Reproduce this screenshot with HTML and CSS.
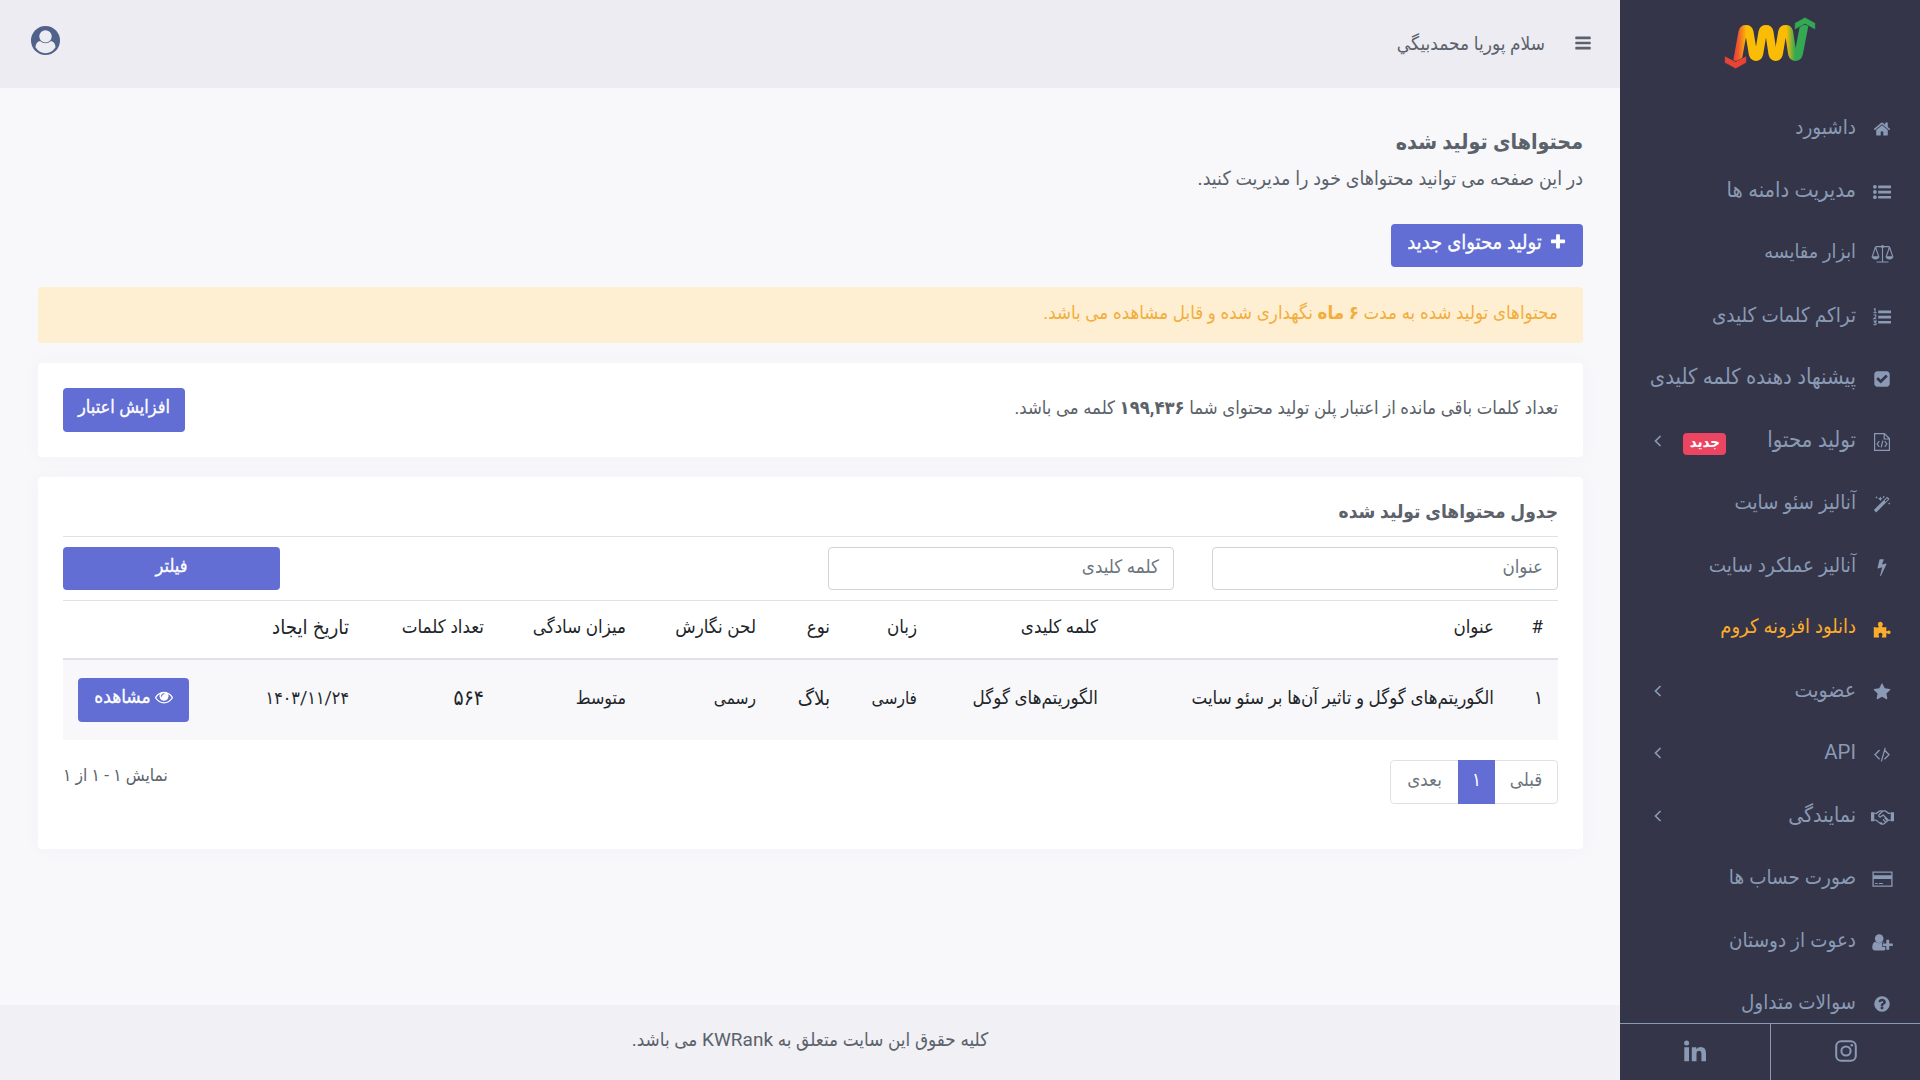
FILE: index.html
```html
<!DOCTYPE html>
<html lang="fa" dir="rtl">
<head>
<meta charset="utf-8">
<title>محتواهای تولید شده</title>
<link rel="stylesheet" href="styles.css">
</head>
<body>
<svg class="defs" width="0" height="0" aria-hidden="true">
  <symbol id="angle" viewBox="0 0 18 18"><path d="M11.5 4 6.5 9l5 5" fill="none" stroke="currentColor" stroke-width="1.7"/></symbol>
</svg>
<div class="app">
  <aside class="sidebar">
    <div class="brand">
      <svg class="logo" viewBox="312 51 276 156">
        <defs><linearGradient id="wave" gradientUnits="userSpaceOnUse" x1="342" y1="0" x2="560" y2="0"><stop offset="0" stop-color="#ea4335"/><stop offset=".06" stop-color="#f05a2e"/><stop offset=".17" stop-color="#fbbc05"/><stop offset=".72" stop-color="#fbbc05"/><stop offset=".84" stop-color="#34a853"/><stop offset="1" stop-color="#34a853"/></linearGradient></defs>
        <path d="M352 184 368 96C371 85 385 85 388 96L399 162C402 173 414 173 417 162L428 96C431 85 445 85 448 96L458 162C461 173 473 173 476 162L487 96C490 85 504 85 507 96L517 162C520 173 533 173 536 162L553 74" fill="none" stroke="url(#wave)" stroke-width="25"/>
        <path d="M524 89 555 72 586 89V69L555 52 524 69Z" fill="#34a853" stroke="#343549" stroke-width="1.5"/>
        <path d="M314 168 347 185 379 168V188L347 206 314 188Z" fill="#ea4335" stroke="#343549" stroke-width="1.5"/>
      </svg>
    </div>
    <nav class="menu">
      <a class="item"><svg class="ico" viewBox="0 0 1792 1792"><path d="M1472 992v480q0 26-19 45t-45 19h-384v-384h-256v384h-384q-26 0-45-19t-19-45v-480q0-1 .5-3t.5-3l575-474 575 474q1 2 1 6zm223-69l-62 74q-8 9-21 11h-3q-13 0-21-7l-692-577-692 577q-12 8-24 7-13-2-21-11l-62-74q-8-10-7-23.5t11-21.5l719-599q32-26 76-26t76 26l244 204v-195q0-14 9-23t23-9h192q14 0 23 9t9 23v408l219 182q10 8 11 21.5t-7 23.5z"/></svg><span>داشبورد</span></a>
      <a class="item"><svg class="ico" viewBox="0 0 18 18"><circle cx="1.9" cy="3.8" r="1.9"/><circle cx="1.9" cy="9" r="1.9"/><circle cx="1.9" cy="14.2" r="1.9"/><path d="M5.2 2.5H18v2.7H5.2zM5.2 7.7H18v2.7H5.2zM5.2 12.9H18v2.7H5.2z"/></svg><span>مدیریت دامنه ها</span></a>
      <a class="item"><svg class="ico wide" viewBox="0 0 22 18"><path d="M4 1.6h14M11 1v15.6M5 17h12M4 2 .8 11.5M4 2l3.2 9.500M18 2l-3.200 9.500M18 2l3.200 9.500" fill="none" stroke="currentColor" stroke-width="1.1"/><circle cx="11" cy="1.600" r="1.500"/><path d="M0 11.300h8c0 1.800-1.700 3.200-4 3.200s-4-1.400-4-3.200zM14 11.300h8c0 1.800-1.700 3.200-4 3.200s-4-1.400-4-3.200z"/></svg><span>ابزار مقایسه</span></a>
      <a class="item"><svg class="ico" viewBox="0 0 18 18"><path d="M5.2 2.500H18v2.700H5.200zM5.200 7.700H18v2.700H5.200zM5.200 12.900H18v2.700H5.200z"/><path d="M.8 1.200 2 .6v4M.5 4.700h3.200M.6 7.300q2.300-1.300 2.400.5Q2.700 9 .7 10.800h2.700M.5 13.100h2.600l-1.400 1.500q1.800 0 1.500 1.500-.6 1.300-2.700.4" fill="none" stroke="currentColor" stroke-width="1.100"/></svg><span>تراکم کلمات کلیدی</span></a>
      <a class="item"><svg class="ico" viewBox="0 0 1792 1792"><path d="M813 1299l614-614q19-19 19-45t-19-45l-102-102q-19-19-45-19t-45 19l-467 467-211-211q-19-19-45-19t-45 19l-102 102q-19 19-19 45t19 45l358 358q19 19 45 19t45-19zm851-883v960q0 119-84.5 203.5t-203.500 84.500h-960q-119 0-203.500-84.500t-84.500-203.500v-960q0-119 84.500-203.500t203.500-84.500h960q119 0 203.500 84.500t84.500 203.500z"/></svg><span>پیشنهاد دهنده کلمه کلیدی</span></a>
      <a class="item"><svg class="ico" viewBox="0 0 18 18"><path d="M1.600.6h9.800l5 5v11.800H1.600zM11.200.8V6h5.200M6.300 8.200 4.100 11l2.200 2.800M11.700 8.200l2.200 2.800-2.200 2.800M9.800 7.600l-1.600 6.800" fill="none" stroke="currentColor" stroke-width="1.200"/></svg><span>تولید محتوا</span><b class="badge">جدید</b><svg class="arrow"><use href="#angle"/></svg></a>
      <a class="item"><svg class="ico" viewBox="0 0 18 18"><path fill-rule="evenodd" d="M1.300 14.600 13.700 2.200q.5-.5 1 0l1.400 1.400q.5.500 0 1L3.700 17q-.5.500-1 0l-1.400-1.400q-.5-.5 0-1zM11.600 5.700l1 1L15 4.200l-1-1z"/><path d="m3.400 1 .4 1 1 .4-1 .400-.4 1-.4-1-1-.400 1-.400zM7.300 1.400 8 3.100l1.700.7-1.700.7-.7 1.700-.7-1.700-1.700-.7 1.700-.7zM10.700.6l.4 1 1 .4-1 .4-.4 1-.4-1-1-.4 1-.4zM16.200 7.300l.4 1 1 .4-1 .4-.4 1-.4-1-1-.4 1-.4z"/></svg><span>آنالیز سئو سایت</span></a>
      <a class="item"><svg class="ico" viewBox="0 0 1792 1792"><path d="M1333 566q18 20 7 44l-540 1157q-13 25-42 25-4 0-14-2-17-5-25.500-19t-4.500-30l197-808-406 101q-4 1-12 1-18 0-31-11-18-15-13-39l201-825q4-14 16-23t28-9h328q19 0 32 12.500t13 29.500q0 8-5 18l-171 463 396-98q8-2 12-2 19 0 34 15z"/></svg><span>آنالیز عملکرد سایت</span></a>
      <a class="item hot"><svg class="ico" viewBox="0 0 18 18"><path d="M.8 7.100q2.500.5 4.800.1c.5-.6-.7-1.500-.7-2.900 0-1.500 1-2.600 2.400-2.600s2.500 1.100 2.500 2.600c0 1.300-1.200 2.100-.8 2.800 1.400.3 3 .1 4.300-.2v4.200c.8.500 1.300-.7 2.500-.7 1.100 0 1.800.7 1.800 1.800s-.7 1.800-1.800 1.800c-1.200 0-1.700-.9-2.500-.6v4.100H9.200c-.9-.6.300-1.600.3-2.700 0-1.200-.8-2-2-2s-2 .8-2 2c0 1.100 1.200 2 .3 2.700H.8z"/></svg><span>دانلود افزونه کروم</span></a>
      <a class="item"><svg class="ico" viewBox="0 0 1792 1792"><path d="M1728 647q0 22-26 48l-363 354 86 500q1 7 1 20 0 21-10.500 35.500t-30.500 14.500q-19 0-40-12l-449-236-449 236q-22 12-40 12-21 0-31.500-14.500t-10.500-35.500q0-6 2-20l86-500-364-354q-25-27-25-48 0-37 56-46l502-73 225-455q19-41 49-41t49 41l225 455 502 73q56 9 56 46z"/></svg><span>عضویت</span><svg class="arrow"><use href="#angle"/></svg></a>
      <a class="item"><svg class="ico" viewBox="0 0 1792 1792"><path d="M681 1399l-50 50q-10 10-23 10t-23-10l-466-466q-10-10-10-23t10-23l466-466q10-10 23-10t23 10l50 50q10 10 10 23t-10 23l-393 393 393 393q10 10 10 23t-10 23zm591-1067l-373 1291q-4 13-15.500 19.500t-23.500 2.500l-62-17q-13-4-19.500-15.500t-2.500-24.500l373-1291q4-13 15.500-19.500t23.500-2.500l62 17q13 4 19.500 15.500t2.500 24.500zm401 651l-466 466q-10 10-23 10t-23-10l-50-50q-10-10-10-23t10-23l393-393-393-393q-10-10-10-23t10-23l50-50q10-10 23-10t23 10l466 466q10 10 10 23t-10 23z"/></svg><span>API</span><svg class="arrow"><use href="#angle"/></svg></a>
      <a class="item"><svg class="ico wide" viewBox="0 0 24 18"><path d="M0 4h3.400v9.500H0zM20.600 4H24v9.500h-3.400z"/><path d="M3.400 5.200h2.400l3-2.300q1.400-.6 3.200 0 1.800-.6 3.300 0l3 2.300h2.300M3.400 12.200h1.800l5.200 4q1.700.8 3.200-.2l4.700-3.800h2.300M12 3 8.300 6.800q-.5 2 1.300 2.200L12.800 6.900l4.800 5M10 14.500l1.700 1.500M12.500 11.500l2.600 2.700M14.200 9.800l2.600 2.800" fill="none" stroke="currentColor" stroke-width="1.300"/></svg><span>نمایندگی</span><svg class="arrow"><use href="#angle"/></svg></a>
      <a class="item"><svg class="ico wide" viewBox="0 0 20 18"><path d="M.6 2.200h18.800v14H.6z" fill="none" stroke="currentColor" stroke-width="1.300"/><path d="M.6 5.200h18.800v3.700H.6zM2.600 12.900h2.600v1.200H2.600zM6.500 12.900h3.900v1.200H6.500z"/></svg><span>صورت حساب ها</span></a>
      <a class="item"><svg class="ico wide" viewBox="0 0 21 18"><circle cx="7.200" cy="5.600" r="4.300"/><path d="M3.400 8.800q3.800 2.700 7.600 0 .9.100 1.400.8H10v4.200h3.300v2.900q-.6.700-1.700.7H2.800q-2.500 0-2.500-2.800Q.3 9.200 3.400 8.800z"/><path d="M14.300 6.800h2.900v3.600h3.600v2.700h-3.600v3.600h-2.900v-3.600h-3.600v-2.700h3.600z"/></svg><span>دعوت از دوستان</span></a>
      <a class="item"><svg class="ico" viewBox="0 0 1792 1792"><path d="M1024 1376v-192q0-14-9-23t-23-9h-192q-14 0-23 9t-9 23v192q0 14 9 23t23 9h192q14 0 23-9t9-23zm256-672q0-88-55.500-163t-138.500-116-170-41q-243 0-371 213-15 24 8 42l132 100q7 6 19 6 16 0 25-12 53-68 86-92 34-24 86-24 48 0 85.500 26t37.500 59q0 38-20 61t-68 45q-63 28-115.500 86.500t-52.500 125.500v36q0 14 9 23t23 9h192q14 0 23-9t9-23q0-19 21.500-49.500t54.500-49.500q32-18 49-28.500t46-35 44.500-48 28-60.500 12.500-81zm384 192q0 209-103 385.500t-279.500 279.500-385.500 103-385.500-103-279.500-279.500-103-385.500 103-385.500 279.500-279.500 385.500-103 385.500 103 279.500 279.500 103 385.500z"/></svg><span>سوالات متداول</span></a>
    </nav>
    <div class="social">
      <a><svg width="22" height="22" viewBox="0 0 22 22"><rect x="1.200" y="1.200" width="19.600" height="19.600" rx="5" fill="none" stroke="currentColor" stroke-width="2"/><circle cx="11" cy="11" r="4.600" fill="none" stroke="currentColor" stroke-width="2"/><circle cx="16.800" cy="5.200" r="1.300"/></svg></a>
      <a><svg width="22" height="22" viewBox="0 0 22 22"><circle cx="2.600" cy="2.900" r="2.500"/><path d="M.3 7.200H5v14H.3zM7.800 7.200h4.600v2q1.500-2.300 4.300-2.300 5.300 0 5.300 6.200v8.100h-4.600v-7.500q0-3-2.300-3-2.600 0-2.600 3v7.500H7.800z"/></svg></a>
    </div>
  </aside>
  <div class="page">
    <header class="topbar">
      <svg class="bars" viewBox="0 0 1792 1792"><path d="M1664 1344v128q0 26-19 45t-45 19h-1408q-26 0-45-19t-19-45v-128q0-26 19-45t45-19h1408q26 0 45 19t19 45zm0-512v128q0 26-19 45t-45 19h-1408q-26 0-45-19t-19-45v-128q0-26 19-45t45-19h1408q26 0 45 19t19 45zm0-512v128q0 26-19 45t-45 19h-1408q-26 0-45-19t-19-45v-128q0-26 19-45t45-19h1408q26 0 45 19t19 45z"/></svg>
      <span class="hello">سلام پوریا محمدبیگي</span>
      <svg class="avatar" viewBox="0 0 28 28"><circle cx="14" cy="14" r="14"/><g fill="#ececf2"><circle cx="14" cy="10" r="6"/><path d="M8.700 14.400q5.300 4.600 10.600 0 4.100 1 4.400 6.100-3.800 5.700-9.700 5.700t-9.700-5.700q.3-5.100 4.400-6.100z"/></g></svg>
    </header>
    <main class="content">
      <h1>محتواهای تولید شده</h1>
      <p class="lead">در این صفحه می توانید محتواهای خود را مدیریت کنید.</p>
      <a class="btn create"><svg class="plus" viewBox="0 0 1792 1792"><path d="M1600 736v192q0 40-28 68t-68 28h-416v416q0 40-28 68t-68 28h-192q-40 0-68-28t-28-68v-416h-416q-40 0-68-28t-28-68v-192q0-40 28-68t68-28h416v-416q0-40 28-68t68-28h192q40 0 68 28t28 68v416h416q40 0 68 28t28 68z"/></svg><span>تولید محتوای جدید</span></a>
      <div class="alert"><span>محتواهای تولید شده به مدت <b>۶ ماه</b> نگهداری شده و قابل مشاهده می باشد.</span></div>
      <section class="card credit">
        <span class="credit-text">تعداد کلمات باقی مانده از اعتبار پلن تولید محتوای شما <b>۱۹۹,۴۳۶</b> کلمه می باشد.</span>
        <a class="btn topup"><span>افزایش اعتبار</span></a>
      </section>
      <section class="card list">
        <h2>جدول محتواهای تولید شده</h2>
        <div class="filters">
          <div class="field"><span>عنوان</span></div>
          <div class="field"><span>کلمه کلیدی</span></div>
          <a class="btn filter"><span>فیلتر</span></a>
        </div>
        <div class="table">
          <div class="row head"><span>#</span><span>عنوان</span><span>کلمه کلیدی</span><span>زبان</span><span>نوع</span><span>لحن نگارش</span><span>میزان سادگی</span><span>تعداد کلمات</span><span class="date">تاریخ ایجاد</span><span></span></div>
          <div class="row body"><span>۱</span><span>الگوریتم‌های گوگل و تاثیر آن‌ها بر سئو سایت</span><span>الگوریتم‌های گوگل</span><span class="lang">فارسی</span><span class="kind">بلاگ</span><span class="tone">رسمی</span><span class="level">متوسط</span><span class="count">۵۶۴</span><span class="day">۱۴۰۳/۱۱/۲۴</span>
            <div class="action"><a class="btn view"><svg class="eye" viewBox="0 0 1792 1792"><path d="M1664 960q-152-236-381-353 61 104 61 225 0 185-131.500 316.500t-316.500 131.500-316.500-131.500-131.500-316.500q0-121 61-225-229 117-381 353 133 205 333.500 326.500t434.500 121.500 434.500-121.500 333.500-326.500zm-720-384q0-20-14-34t-34-14q-125 0-214.500 89.500t-89.500 214.500q0 20 14 34t34 14 34-14 14-34q0-86 61-147t147-61q20 0 34-14t14-34zm848 384q0 34-20 69-140 230-376.500 368.500t-499.500 138.500-499.500-139-376.500-368q-20-35-20-69t20-69q140-229 376.500-368t499.500-139 499.500 139 376.500 368q20 35 20 69z"/></svg><span>مشاهده</span></a></div>
          </div>
        </div>
        <div class="bottom">
          <div class="pager"><a class="prev">قبلی</a><a class="current">۱</a><a class="next">بعدی</a></div>
          <span class="range">نمایش ۱ - ۱ از ۱</span>
        </div>
      </section>
    </main>
    <footer class="footer"><span>کلیه حقوق این سایت متعلق به <span class="latin">KWRank</span> می باشد.</span></footer>
  </div>
</div>
</body>
</html>
```
FILE: styles.css
```css
* { box-sizing: border-box; }
html, body { margin: 0; height: 100%; overflow: hidden; }
body { font: 18.6px/24px Roboto, "DejaVu Sans Condensed", "DejaVu Sans", sans-serif; color: #5b626b; background: #f8f8fb; }
svg { fill: currentColor; display: block; flex: none; overflow: visible; }
.defs { position: absolute; }
span, a, h1, h2, p { white-space: nowrap; }
h1, h2, p { margin: 0; }
.app { display: flex; height: 1080px; }

.sidebar { width: 300px; flex: none; background: #343549; color: #8a9ab4; display: flex; flex-direction: column; }
.brand { height: 97px; flex: none; padding: 17px 0 0 104px; display: flex; justify-content: flex-end; }
.logo { width: 92px; height: 52px; }
.menu { flex: 1; min-height: 0; overflow: hidden; }
.item { display: flex; align-items: center; height: 62.5px; padding: 0 28px 0 29px; font-size: 20.4px; }
.item:nth-child(2) { font-size: 21.7px; }
.item:nth-child(3) { font-size: 19.6px; }
.item:nth-child(5) { font-size: 21.9px; }
.item:nth-child(6) { font-size: 22px; }
.item:nth-child(9) { font-size: 19.9px; }
.item:nth-child(10), .item:nth-child(12) { font-size: 21.1px; }
.item .ico { width: 20px; height: 18px; margin-left: 16px; margin-top: 2px; }
.item > span { padding-bottom: 2px; }
.item .ico.wide { width: 23px; margin-right: -2px; margin-left: 15px; }
.hot { color: #fcac2a; }
.arrow { width: 18px; height: 18px; margin-right: auto; }
.badge { background: #ec4561; color: #fff; font-size: 15px; line-height: 19px; height: 22px; width: 43px; text-align: center; border-radius: 4px; margin-right: 41px; margin-top: 7px; }
.social { display: grid; grid-template-columns: 1fr 1fr; height: 57px; flex: none; border-top: 1px solid #8a9ab4; }
.social a { display: flex; align-items: center; justify-content: center; padding-bottom: 2px; }
.social a:first-child { border-left: 1px solid #8a9ab4; }

.page { flex: 1; min-width: 0; display: flex; flex-direction: column; }
.topbar { height: 88px; flex: none; display: flex; align-items: center; padding: 0 28px 0 31px; background: #ececf2; }
.bars { width: 18px; height: 18px; margin-top: -2px; }
.hello { margin-right: 29px; font-size: 18.9px; }
.avatar { width: 29px; height: 29px; margin: -7px auto 0 0; color: #51628a; }
.content { flex: 1; padding: 37px 37px 0 38px; display: flex; flex-direction: column; }
h1 { font-size: 21.3px; line-height: 34px; }
.lead { margin-top: 8px; margin-bottom: 33px; font-size: 19.4px; line-height: 24px; }
.btn { display: flex; align-items: center; justify-content: center; height: 43px; padding-bottom: 6px; border-radius: 4px; background: #626ed4; color: #fff; font-size: 18px; -webkit-text-stroke: .3px #fff; }
.create { width: 192px; align-self: flex-start; gap: 7px; font-size: 20px; padding-bottom: 7px; }
.plus { width: 18px; height: 18px; margin-top: -1px; }
.alert { height: 56px; margin-top: 20px; padding: 14px 25px 0; border-radius: 4px; background: #feefd2; color: #f3ad3d; }
.card { margin-top: 20px; background: #fff; border-radius: 4px; box-shadow: 0 0 13px rgba(236, 236, 241, .44); }
.credit { height: 94px; padding: 25px; display: flex; justify-content: space-between; align-items: flex-start; }
.credit-text { padding-top: 8px; font-size: 18.4px; }
.topup { width: 122px; height: 44px; }
.list { height: 372px; padding: 19px 25px 0; }
h2 { font-size: 19px; line-height: 32px; height: 41px; border-bottom: 1px solid #dee2e6; }
.filters { display: flex; height: 63px; padding-top: 10px; gap: 38px; }
.field { width: 346px; height: 43px; border: 1px solid #ced4da; border-radius: 4px; padding: 7px 14px; color: #6c757d; }
.filter { width: 217px; margin-right: auto; }
.table { color: #212529; }
.row { display: grid; grid-template-columns: 49px 396px 181px 87px 74px 130px 142px 135px 1fr 126px; }
.row > span { padding: 0 15px; }
.head { height: 60px; padding-top: 14px; border-top: 1px solid #dee2e6; border-bottom: 2px solid #dee2e6; }
.head .date { font-size: 20.3px; }
.body { height: 80px; padding-top: 18px; background: #f8f8fb; }
.body > span { padding-top: 8px; }
.body .lang, .body .tone { font-size: 17.2px; }
.body .kind { font-size: 20.2px; }
.body .level, .body .day { font-size: 17.8px; }
.body .count { font-size: 21px; }
.action { padding-right: 0; }
.view { width: 111px; height: 44px; gap: 4px; font-size: 19px; }
.eye { width: 18px; height: 18px; }
.bottom { display: flex; justify-content: space-between; padding-top: 20px; }
.pager { display: flex; height: 44px; border: 1px solid #dee2e6; border-radius: 4px; color: #6c757d; }
.pager a { text-align: center; padding-top: 7px; }
.prev { width: 62px; }
.current { width: 37px; margin: -1px 0; background: #626ed4; color: #fff; }
.pager .current { padding-top: 8px; }
.next { width: 67px; }
.range { padding-top: 3px; font-size: 17.2px; }
.footer { height: 75px; flex: none; padding-top: 23px; text-align: center; background: #f0f0f5; font-size: 18.8px; }
.footer .latin { font-size: 19px; }
```
